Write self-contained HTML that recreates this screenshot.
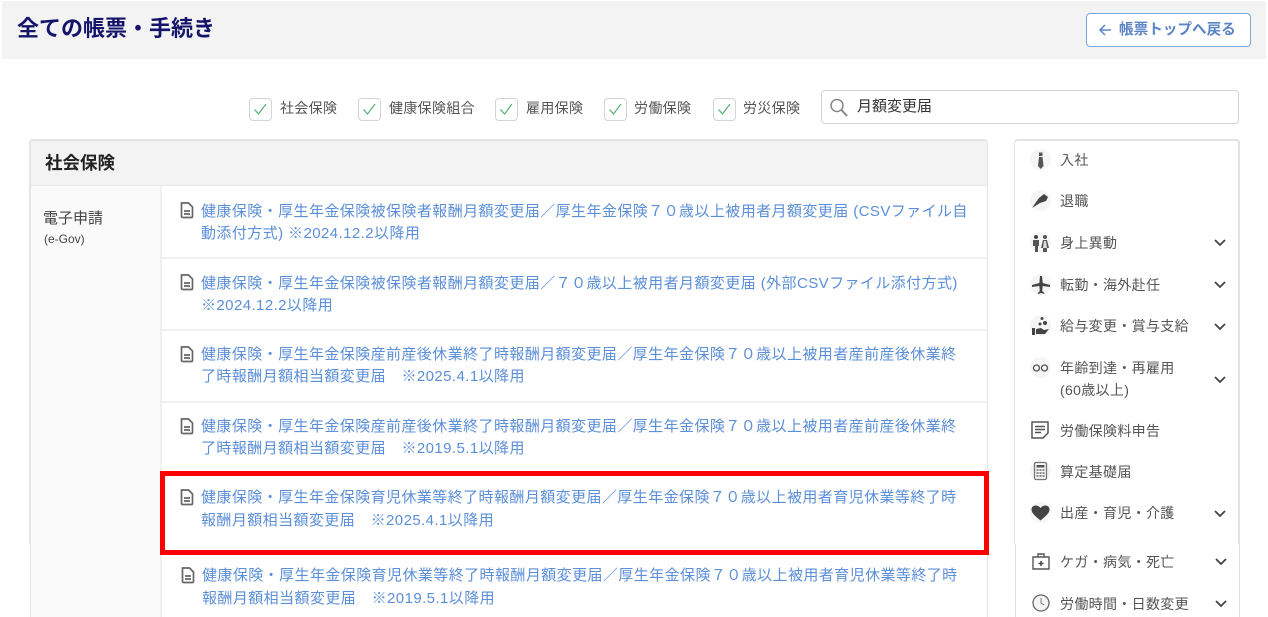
<!DOCTYPE html>
<html lang="ja"><head><meta charset="utf-8"><title>全ての帳票・手続き</title>
<style>
html,body{margin:0;padding:0;background:#fff;width:1268px;height:617px;overflow:hidden}
body{position:relative;font-family:"Liberation Sans","Noto Sans CJK JP",sans-serif;color:#444;filter:blur(.3px)}
.a{position:absolute;box-sizing:border-box}
.t{position:absolute;white-space:nowrap;line-height:20px;height:20px}
.l{color:#5b8fd9;font-size:15px;letter-spacing:.42px}
.f{font-size:14px;color:#555;letter-spacing:.33px}
.s{font-size:14px;color:#555;letter-spacing:.33px}
.cb{position:absolute;width:21px;height:21px;border:1px solid #d4d4d4;border-radius:4px;background:#fff;top:98px}
.cb svg{position:absolute;left:3px;top:3px}
.hr{position:absolute;height:2px;background:#efefef;left:162px;width:824px}
svg{position:absolute;overflow:visible}
.c{position:absolute;left:1030px;width:21px;height:21px;border-radius:50%;background:#f5f5f5}
</style></head><body>
<div class="a" style="left:2px;top:1px;width:1264px;height:58px;background:#f3f3f3"></div>
<div class="t" style="left:17px;top:17px;height:24px;line-height:24px;font-size:22px;font-weight:700;color:#14146b">全ての帳票・手続き</div>
<div class="a" style="left:1086px;top:13px;width:165px;height:34px;background:#fff;border:1px solid #7ba3dc;border-radius:4px"></div>
<svg style="left:1098px;top:23px" width="14" height="14" viewBox="0 0 14 14"><path d="M13 7H2M7 2L2 7l5 5" fill="none" stroke="#5b86c8" stroke-width="1.500"/></svg>
<div class="t" style="left:1119px;top:20px;font-size:14.600px;font-weight:700;color:#5a84c4">帳票トップへ戻る</div>

<div class="cb" style="left:249px"><svg width="14" height="14" viewBox="0 0 14 14"><path d="M1.500 7.500L5.500 12 13 2" fill="none" stroke="#4caf68" stroke-width="1.100"/></svg></div>
<div class="t f" style="left:280px;top:98px">社会保険</div>
<div class="cb" style="left:358px"><svg width="14" height="14" viewBox="0 0 14 14"><path d="M1.500 7.500L5.500 12 13 2" fill="none" stroke="#4caf68" stroke-width="1.100"/></svg></div>
<div class="t f" style="left:389px;top:98px">健康保険組合</div>
<div class="cb" style="left:495px"><svg width="14" height="14" viewBox="0 0 14 14"><path d="M1.500 7.500L5.500 12 13 2" fill="none" stroke="#4caf68" stroke-width="1.100"/></svg></div>
<div class="t f" style="left:526px;top:98px">雇用保険</div>
<div class="cb" style="left:604px"><svg width="14" height="14" viewBox="0 0 14 14"><path d="M1.500 7.500L5.500 12 13 2" fill="none" stroke="#4caf68" stroke-width="1.100"/></svg></div>
<div class="t f" style="left:634px;top:98px">労働保険</div>
<div class="cb" style="left:713px"><svg width="14" height="14" viewBox="0 0 14 14"><path d="M1.500 7.500L5.500 12 13 2" fill="none" stroke="#4caf68" stroke-width="1.100"/></svg></div>
<div class="t f" style="left:743px;top:98px">労災保険</div>

<div class="a" style="left:821px;top:90px;width:418px;height:34px;border:1px solid #d4d4d4;border-radius:4px;background:#fff"></div>
<svg style="left:829px;top:98px" width="20" height="20" viewBox="0 0 20 20"><circle cx="8" cy="7.500" r="6" fill="none" stroke="#888" stroke-width="1.500"/><path d="M12.500 12l5.500 6" stroke="#888" stroke-width="2" fill="none"/></svg>
<div class="t" style="left:857px;top:97px;font-size:15px;color:#333">月額変更届</div>

<!-- main card -->
<div class="a" style="left:29px;top:139px;width:959px;height:405px;border:1px solid #e4e4e4;border-width:2px 1px 0 2px;border-radius:4px 4px 0 0;background:#fff"></div>
<div class="a" style="left:30px;top:544px;width:958px;height:80px;border:1px solid #e4e4e4;border-width:0 1px 0 2px;background:#fff"></div>
<div class="a" style="left:31px;top:141px;width:956px;height:45px;background:#f3f3f3;border-bottom:1px solid #e8e8e8"></div>
<div class="t" style="left:45px;top:153px;font-size:17.500px;font-weight:700;color:#222">社会保険</div>
<div class="a" style="left:31px;top:186px;width:131px;height:431px;background:#fafafa;border-right:2px solid #f0f0f0"></div>
<div class="t" style="left:43px;top:209px;font-size:15px;color:#444">電子申請</div>
<div class="t" style="left:44px;top:229px;font-size:12px;color:#444">(e-Gov)</div>

<div class="hr" style="top:257px"></div><div class="hr" style="top:329px"></div><div class="hr" style="top:401px"></div>

<svg style="left:180px;top:201px" width="14" height="17" viewBox="0 0 14 17"><path d="M1.500 2h7l4 4v9.500a1 1 0 0 1-1 1h-9a1 1 0 0 1-1-1zM4 10h6M4 13h6" fill="none" stroke="#666" stroke-width="1.700"/></svg>
<div class="t l" style="left:201px;top:202px">健康保険・厚生年金保険被保険者報酬月額変更届／厚生年金保険７０歳以上被用者月額変更届 (CSVファイル自</div>
<div class="t l" style="left:201px;top:224px">動添付方式) ※2024.12.2以降用</div>

<svg style="left:180px;top:273px" width="14" height="17" viewBox="0 0 14 17"><path d="M1.500 2h7l4 4v9.500a1 1 0 0 1-1 1h-9a1 1 0 0 1-1-1zM4 10h6M4 13h6" fill="none" stroke="#666" stroke-width="1.700"/></svg>
<div class="t l" style="left:201px;top:274px">健康保険・厚生年金保険被保険者報酬月額変更届／７０歳以上被用者月額変更届 (外部CSVファイル添付方式)</div>
<div class="t l" style="left:201px;top:296px">※2024.12.2以降用</div>

<svg style="left:180px;top:345px" width="14" height="17" viewBox="0 0 14 17"><path d="M1.500 2h7l4 4v9.500a1 1 0 0 1-1 1h-9a1 1 0 0 1-1-1zM4 10h6M4 13h6" fill="none" stroke="#666" stroke-width="1.700"/></svg>
<div class="t l" style="left:201px;top:345px">健康保険・厚生年金保険産前産後休業終了時報酬月額変更届／厚生年金保険７０歳以上被用者産前産後休業終</div>
<div class="t l" style="left:201px;top:367px">了時報酬月額相当額変更届　※2025.4.1以降用</div>

<svg style="left:180px;top:417px" width="14" height="17" viewBox="0 0 14 17"><path d="M1.500 2h7l4 4v9.500a1 1 0 0 1-1 1h-9a1 1 0 0 1-1-1zM4 10h6M4 13h6" fill="none" stroke="#666" stroke-width="1.700"/></svg>
<div class="t l" style="left:201px;top:417px">健康保険・厚生年金保険産前産後休業終了時報酬月額変更届／厚生年金保険７０歳以上被用者産前産後休業終</div>
<div class="t l" style="left:201px;top:439px">了時報酬月額相当額変更届　※2019.5.1以降用</div>

<svg style="left:180px;top:488px" width="14" height="17" viewBox="0 0 14 17"><path d="M1.500 2h7l4 4v9.500a1 1 0 0 1-1 1h-9a1 1 0 0 1-1-1zM4 10h6M4 13h6" fill="none" stroke="#666" stroke-width="1.700"/></svg>
<div class="t l" style="left:201px;top:488px">健康保険・厚生年金保険育児休業等終了時報酬月額変更届／厚生年金保険７０歳以上被用者育児休業等終了時</div>
<div class="t l" style="left:201px;top:511px">報酬月額相当額変更届　※2025.4.1以降用</div>

<div class="a" style="left:160px;top:471px;width:829px;height:84px;border:5px solid #f00"></div>

<svg style="left:181px;top:566px" width="14" height="17" viewBox="0 0 14 17"><path d="M1.500 2h7l4 4v9.500a1 1 0 0 1-1 1h-9a1 1 0 0 1-1-1zM4 10h6M4 13h6" fill="none" stroke="#666" stroke-width="1.700"/></svg>
<div class="t l" style="left:202px;top:566px">健康保険・厚生年金保険育児休業等終了時報酬月額変更届／厚生年金保険７０歳以上被用者育児休業等終了時</div>
<div class="t l" style="left:202px;top:589px">報酬月額相当額変更届　※2019.5.1以降用</div>

<!-- sidebar -->
<div class="a" style="left:1014px;top:139px;width:226px;height:405px;border:1px solid #e2e2e2;border-width:2px 2px 0 1px;border-radius:4px 4px 0 0;background:#fff"></div>
<div class="a" style="left:1015px;top:544px;width:225px;height:80px;border:1px solid #e2e2e2;border-width:0 1px 0 1px;background:#fff"></div>

<div class="c" style="top:149px"></div>
<svg style="left:1030px;top:149px" width="22" height="22" viewBox="0 0 22 22"><path d="M9 3.500h3.500v3.500H9zM9 8h3.500l1 9-2.700 3-2.800-3z" fill="#555"/></svg>
<div class="t s" style="left:1060px;top:150px">入社</div>

<div class="c" style="top:190px"></div>
<svg style="left:1030px;top:190px" width="22" height="22" viewBox="0 0 22 22"><path d="M2 18l7-10 5-4 4 3-2 4-6 2z" fill="#444"/></svg>
<div class="t s" style="left:1060px;top:191px">退職</div>

<div class="c" style="top:232px"></div>
<svg style="left:1030px;top:232px" width="22" height="22" viewBox="0 0 22 22"><circle cx="6" cy="5" r="2" fill="#444"/><circle cx="15" cy="5" r="2" fill="#555"/><path d="M3 8h6v6H8v6H5v-6H3zM13 8h4l2 8h-2v4h-4v-4h-2z" fill="#555"/><path d="M14 9h2l1 7h-4z" fill="#ddd"/></svg>
<div class="t s" style="left:1060px;top:233px">身上異動</div>

<div class="c" style="top:274px"></div>
<svg style="left:1030px;top:274px" width="22" height="22" viewBox="0 0 22 22"><path d="M10 2h2l.7 7 7.300 2v2l-7.300-1-.5 5 2 2v1l-3.200-1-3.200 1v-1l2-2-.5-5-7.300 1v-2l7.300-2z" fill="#444"/></svg>
<div class="t s" style="left:1060px;top:275px">転勤・海外赴任</div>

<div class="c" style="top:315px"></div>
<svg style="left:1030px;top:315px" width="22" height="22" viewBox="0 0 22 22"><circle cx="12" cy="3.500" r="1.500" fill="#444"/><circle cx="15" cy="8" r="2" fill="#444"/><circle cx="10" cy="9" r="1.500" fill="#444"/><path d="M2 13h3v7H2zM6 14l5-1 3 2 5-1-4 5H6z" fill="#444"/></svg>
<div class="t s" style="left:1060px;top:316px">給与変更・賞与支給</div>

<div class="c" style="top:357px"></div>
<svg style="left:1030px;top:357px" width="22" height="22" viewBox="0 0 22 22"><circle cx="6.500" cy="11" r="3" fill="none" stroke="#555" stroke-width="1.300"/><circle cx="14.500" cy="11" r="3" fill="none" stroke="#555" stroke-width="1.300"/></svg>
<div class="t s" style="left:1060px;top:358px">年齢到達・再雇用</div>
<div class="t s" style="left:1060px;top:380px">(60歳以上)</div>

<svg style="left:1031px;top:421px" width="18" height="18" viewBox="0 0 18 18"><path d="M1 1h16v11l-5 5H1zM4 5.500h10M4 8.500h10M4 11.500h6" fill="none" stroke="#555" stroke-width="1.500"/></svg>
<div class="t s" style="left:1060px;top:421px">労働保険料申告</div>

<div class="c" style="top:460px"></div>
<svg style="left:1030px;top:460px" width="22" height="22" viewBox="0 0 22 22"><rect x="4.500" y="2.500" width="12" height="17" rx="1.500" fill="none" stroke="#777" stroke-width="1.300"/><path d="M6.500 5h8v2.500h-8z" fill="#555"/><path d="M6.500 10h2M9.500 10h2M12.500 10h2M6.500 13h2M9.500 13h2M12.500 13h2M6.500 16h2M9.500 16h2M12.500 16h2" stroke="#666" stroke-width="1.500"/></svg>
<div class="t s" style="left:1060px;top:462px">算定基礎届</div>

<div class="c" style="top:502px"></div>
<svg style="left:1030px;top:502px" width="22" height="22" viewBox="0 0 22 22"><path d="M10.500 18.500C5 14 1.500 11 1.500 7.500 1.500 3 7.500 2 10.500 6c3-4 9-3 9 1.500 0 3.500-3.500 6.500-9 11z" fill="#444"/></svg>
<div class="t s" style="left:1060px;top:503px">出産・育児・介護</div>

<svg style="left:1032px;top:552px" width="18" height="18" viewBox="0 0 18 18"><path d="M1 5h16v12H1zM6 5V2h6v3" fill="none" stroke="#555" stroke-width="1.400"/><path d="M9 9v5M6.500 11.500h5" stroke="#444" stroke-width="1.500"/></svg>
<div class="t s" style="left:1060px;top:552px">ケガ・病気・死亡</div>

<svg style="left:1032px;top:594px" width="18" height="18" viewBox="0 0 18 18"><circle cx="9" cy="9" r="8" fill="#f4f4f4" stroke="#666" stroke-width="1.300"/><path d="M9 4v5l3 2" fill="none" stroke="#777"/></svg>
<div class="t s" style="left:1060px;top:594px">労働時間・日数変更</div>

<svg style="left:1214px;top:239px" width="12" height="8" viewBox="0 0 12 8"><path d="M1 1l5 5 5-5" fill="none" stroke="#444" stroke-width="1.800"/></svg>
<svg style="left:1214px;top:281px" width="12" height="8" viewBox="0 0 12 8"><path d="M1 1l5 5 5-5" fill="none" stroke="#444" stroke-width="1.800"/></svg>
<svg style="left:1214px;top:323px" width="12" height="8" viewBox="0 0 12 8"><path d="M1 1l5 5 5-5" fill="none" stroke="#444" stroke-width="1.800"/></svg>
<svg style="left:1214px;top:376px" width="12" height="8" viewBox="0 0 12 8"><path d="M1 1l5 5 5-5" fill="none" stroke="#444" stroke-width="1.800"/></svg>
<svg style="left:1214px;top:510px" width="12" height="8" viewBox="0 0 12 8"><path d="M1 1l5 5 5-5" fill="none" stroke="#444" stroke-width="1.800"/></svg>
<svg style="left:1215px;top:558px" width="12" height="8" viewBox="0 0 12 8"><path d="M1 1l5 5 5-5" fill="none" stroke="#444" stroke-width="1.800"/></svg>
<svg style="left:1215px;top:600px" width="12" height="8" viewBox="0 0 12 8"><path d="M1 1l5 5 5-5" fill="none" stroke="#444" stroke-width="1.800"/></svg>
</body></html>
